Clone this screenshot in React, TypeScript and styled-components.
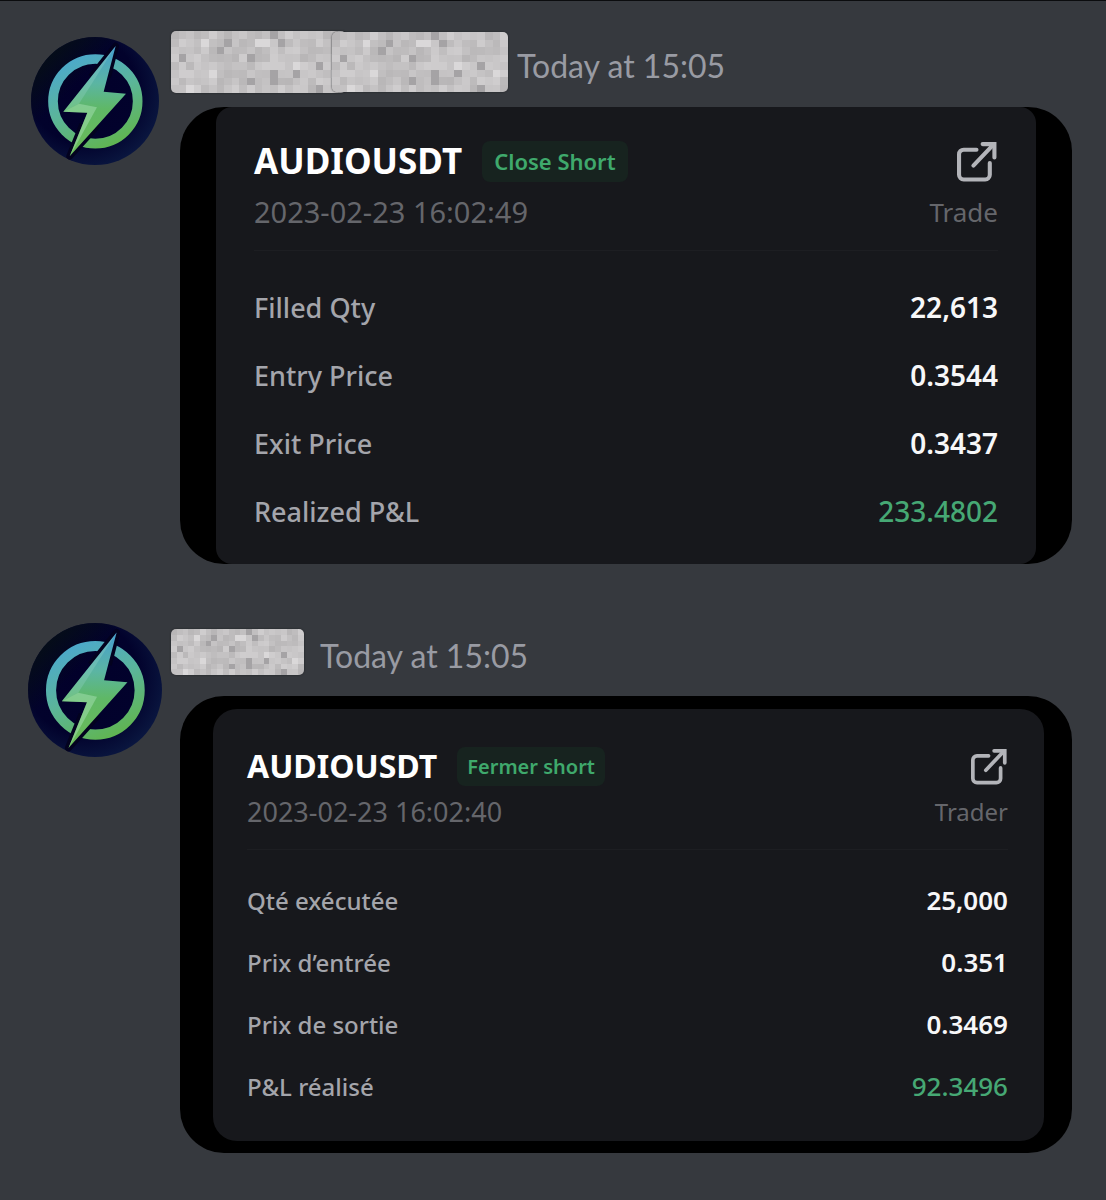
import React, { useId } from "react";
import styled, { createGlobalStyle } from "styled-components";

const GlobalStyle = createGlobalStyle`
  * { box-sizing: border-box; }
  body {
    margin: 0;
    background: #36393e;
    font-family: "Noto Sans", "Open Sans", sans-serif;
  }
`;

const Page = styled.main`
  min-height: 100vh;
  display: flex;
  flex-direction: column;
  gap: 59px;
  padding: 30px 34px 46px 28px;
  border-top: 1px solid #0b0c0e;
  background: #36393e;
`;

const Message = styled.article`
  display: grid;
  grid-template-columns: 134px minmax(0, 1fr);
  column-gap: 9px;
`;

const AvatarSlot = styled.div<{ $drop: number }>`
  display: flex;
  justify-content: center;
  align-items: flex-start;
  padding-top: ${(p) => p.$drop}px;
`;

const Content = styled.div<{ $large: boolean }>`
  display: flex;
  flex-direction: column;
  gap: ${(p) => (p.$large ? 14 : 21)}px;
  padding-top: ${(p) => (p.$large ? 0 : 6)}px;
`;

const Header = styled.header<{ $large: boolean }>`
  display: flex;
  align-items: center;
  gap: ${(p) => (p.$large ? 9 : 16)}px;
  height: ${(p) => (p.$large ? 62 : 46)}px;
`;

const Author = styled.div`
  display: flex;
  align-items: center;
`;

const Mosaic = styled.svg<{ $joined?: boolean }>`
  display: block;
  border-radius: 5px;
  margin-left: ${(p) => (p.$joined ? -14 : 0)}px;
  box-shadow: 0 0 2px #1e1f22;
`;

const Timestamp = styled.time`
  color: #999ba3;
  font-family: Lato, "Noto Sans", sans-serif;
  font-size: 32px;
  line-height: 40px;
  padding-top: 8px;
  white-space: nowrap;
`;

const Attachment = styled.div<{ $inset: boolean }>`
  margin-left: 9px;
  padding: ${(p) => (p.$inset ? "13px 28px 12px 33px" : "0 36px")};
  border-radius: 44px;
  background: #000;
  overflow: hidden;
`;

const Panel = styled.section<{ $inset: boolean }>`
  padding: ${(p) => (p.$inset ? "35px 36px 24px 34px" : "32px 38px 19px")};
  border-radius: ${(p) => (p.$inset ? 24 : 16)}px;
  background: #17181c;
`;

const Line = styled.div<{ $height: number }>`
  display: flex;
  align-items: center;
  justify-content: space-between;
  height: ${(p) => p.$height}px;
`;

const Heading = styled.div`
  display: flex;
  align-items: center;
  gap: 20px;
`;

const Pair = styled.h2<{ $large: boolean }>`
  margin: 0;
  color: #fff;
  font-size: ${(p) => (p.$large ? 35 : 32)}px;
  font-weight: 700;
  line-height: 44px;
`;

const Badge = styled.span<{ $large: boolean }>`
  padding: 0 ${(p) => (p.$large ? 12 : 10)}px;
  border-radius: 8px;
  background: #17231f;
  color: #3fa96c;
  font-size: ${(p) => (p.$large ? 22 : 20)}px;
  font-weight: 600;
  line-height: ${(p) => (p.$large ? 41 : 39)}px;
  white-space: nowrap;
`;

const ShareLink = styled.a`
  display: block;
  color: #b3b4b9;
  line-height: 0;
`;

const Posted = styled.time<{ $large: boolean }>`
  color: #65666b;
  font-size: ${(p) => (p.$large ? 29 : 27)}px;
  line-height: 36px;
`;

const LinkName = styled.span<{ $large: boolean }>`
  color: #65666b;
  font-size: ${(p) => (p.$large ? 26 : 24)}px;
  line-height: 36px;
`;

const Rule = styled.hr<{ $large: boolean }>`
  margin: ${(p) => (p.$large ? "9px 0 22px" : "13px 0 19px")};
  border: 0;
  height: 1px;
  background: #1d1e22;
`;

const Details = styled.dl`
  margin: 0;
`;

const Row = styled.div<{ $large: boolean }>`
  display: flex;
  align-items: center;
  justify-content: space-between;
  height: ${(p) => (p.$large ? 68 : 62)}px;
`;

const Label = styled.dt<{ $large: boolean }>`
  color: #a4a5ab;
  font-size: ${(p) => (p.$large ? 27 : 24)}px;
  font-weight: 500;
`;

const Value = styled.dd<{ $large: boolean; $gain: boolean }>`
  margin: 0;
  color: ${(p) => (p.$gain ? "#46a874" : "#f7f7f8")};
  font-size: ${(p) => (p.$large ? 28 : 26)}px;
  font-weight: ${(p) => (p.$gain ? 500 : 600)};
`;

function Avatar({ size }: { size: number }) {
  const id = useId();
  return (
    <svg width={size} height={size} viewBox="0 0 384 384" role="img" aria-label="Lightning bolt avatar">
      <defs>
        <radialGradient id={`${id}bg`} cx="0.4" cy="0.4" r="0.65">
          <stop offset="0" stopColor="#02002a" />
          <stop offset="0.65" stopColor="#02022c" />
          <stop offset="1" stopColor="#0a1740" />
        </radialGradient>
        <linearGradient id={`${id}shade`} x1="0" y1="0" x2="0.6" y2="0.6">
          <stop offset="0.2" stopColor="#050e16" />
          <stop offset="0.6" stopColor="#050e16" stopOpacity="0" />
        </linearGradient>
        <linearGradient id={`${id}ring`} gradientUnits="userSpaceOnUse" x1="110" y1="60" x2="240" y2="330">
          <stop offset="0" stopColor="#4ba8cf" />
          <stop offset="0.5" stopColor="#5bb59a" />
          <stop offset="1" stopColor="#60b550" />
        </linearGradient>
        <linearGradient id={`${id}bolt`} gradientUnits="userSpaceOnUse" x1="200" y1="30" x2="200" y2="340">
          <stop offset="0" stopColor="#469fd0" />
          <stop offset="0.35" stopColor="#5bb5a3" />
          <stop offset="0.6" stopColor="#5fb866" />
          <stop offset="1" stopColor="#6abb58" />
        </linearGradient>
      </defs>
      <circle cx="192" cy="192" r="192" fill={`url(#${id}bg)`} />
      <circle cx="192" cy="192" r="192" fill={`url(#${id}shade)`} />
      <circle cx="193" cy="193" r="127" fill="none" stroke={`url(#${id}ring)`} strokeWidth="29" />
      <path
        d="M180 120 254 27 230 120M155 262 116 358 200 265"
        fill="#03021f"
        stroke="#03021f"
        strokeWidth="20"
        strokeLinejoin="round"
      />
      <path d="M254 27 97 224 169 227 116 358 285 170 218 164Z" fill={`url(#${id}bolt)`} />
      <path d="M254 27 97 224 144 200Z" fill="#8fd0c4" opacity="0.35" />
      <path d="M97 224 144 200 198 211 145 307 116 358 169 227Z" fill="#a5dfb4" opacity="0.5" />
    </svg>
  );
}

const COLS = 23;
const ROWS = 8;
const DARK = ["1,3", "7,1", "14,1", "10,3", "10,6", "13,5", "13,6", "16,5", "19,4", "19,7", "13,0", "6,2"];
const LIGHT = ["5,5", "11,1", "12,1", "16,4", "4,1", "21,5", "2,7"];

function shade(col: number, row: number) {
  const key = `${col},${row}`;
  if (DARK.includes(key)) return "#a5a3a5";
  if (LIGHT.includes(key)) return "#dad8d9";
  const wave = Math.sin(col * 127 + row * 311) * 43758;
  const level = 183 + Math.floor((wave - Math.floor(wave)) * 24);
  return `rgb(${level + 1}, ${level - 1}, ${level})`;
}

function HiddenName({ width, height, joined }: { width: number; height: number; joined?: boolean }) {
  const cells = Array.from({ length: COLS * ROWS }, (_, i) => [i % COLS, Math.floor(i / COLS)]);
  return (
    <Mosaic
      $joined={joined}
      width={width}
      height={height}
      viewBox={`0 0 ${COLS} ${ROWS}`}
      preserveAspectRatio="none"
      shapeRendering="crispEdges"
      aria-hidden="true"
    >
      {cells.map(([col, row]) => (
        <rect key={`${col}-${row}`} x={col} y={row} width="1" height="1" fill={shade(col, row)} />
      ))}
    </Mosaic>
  );
}

function ShareIcon({ size }: { size: number }) {
  return (
    <svg width={size} height={size} viewBox="0 0 40 40" fill="none" stroke="currentColor" strokeWidth="4">
      <path
        d="M19 8.500H6.500A4.500 4.500 0 0 0 2 13v20a4.500 4.500 0 0 0 4.500 4.500h21A4.500 4.500 0 0 0 32 33V21.500"
        strokeLinecap="round"
      />
      <path d="M16 24 35 4" strokeLinecap="round" />
      <path d="M25 3h11.500v13" strokeLinecap="round" />
    </svg>
  );
}

interface Trade {
  large: boolean;
  pair: string;
  side: string;
  date: string;
  link: string;
  rows: [string, string][];
}

const TRADES: Trade[] = [
  {
    large: true,
    pair: "AUDIOUSDT",
    side: "Close Short",
    date: "2023-02-23 16:02:49",
    link: "Trade",
    rows: [
      ["Filled Qty", "22,613"],
      ["Entry Price", "0.3544"],
      ["Exit Price", "0.3437"],
      ["Realized P&L", "233.4802"],
    ],
  },
  {
    large: false,
    pair: "AUDIOUSDT",
    side: "Fermer short",
    date: "2023-02-23 16:02:40",
    link: "Trader",
    rows: [
      ["Qté exécutée", "25,000"],
      ["Prix d’entrée", "0.351"],
      ["Prix de sortie", "0.3469"],
      ["P&L réalisé", "92.3496"],
    ],
  },
];

function TradeMessage({ trade }: { trade: Trade }) {
  const { large } = trade;
  return (
    <Message>
      <AvatarSlot $drop={large ? 6 : 0}>
        <Avatar size={large ? 128 : 134} />
      </AvatarSlot>
      <Content $large={large}>
        <Header $large={large}>
          <Author>
            <HiddenName width={large ? 175 : 133} height={large ? 62 : 46} />
            {large && <HiddenName width={176} height={60} joined />}
          </Author>
          <Timestamp>Today at 15:05</Timestamp>
        </Header>
        <Attachment $inset={!large}>
          <Panel $inset={!large}>
            <Line $height={44}>
              <Heading>
                <Pair $large={large}>{trade.pair}</Pair>
                <Badge $large={large}>{trade.side}</Badge>
              </Heading>
              <ShareLink href="#" aria-label={trade.link}>
                <ShareIcon size={large ? 41 : 37} />
              </ShareLink>
            </Line>
            <Line $height={large ? 58 : 48}>
              <Posted $large={large}>{trade.date}</Posted>
              <LinkName $large={large}>{trade.link}</LinkName>
            </Line>
            <Rule $large={large} />
            <Details>
              {trade.rows.map(([label, value], i) => (
                <Row key={label} $large={large}>
                  <Label $large={large}>{label}</Label>
                  <Value $large={large} $gain={i === trade.rows.length - 1}>
                    {value}
                  </Value>
                </Row>
              ))}
            </Details>
          </Panel>
        </Attachment>
      </Content>
    </Message>
  );
}

export default function App() {
  return (
    <>
      <GlobalStyle />
      <Page>
        {TRADES.map((trade) => (
          <TradeMessage key={trade.date} trade={trade} />
        ))}
      </Page>
    </>
  );
}
